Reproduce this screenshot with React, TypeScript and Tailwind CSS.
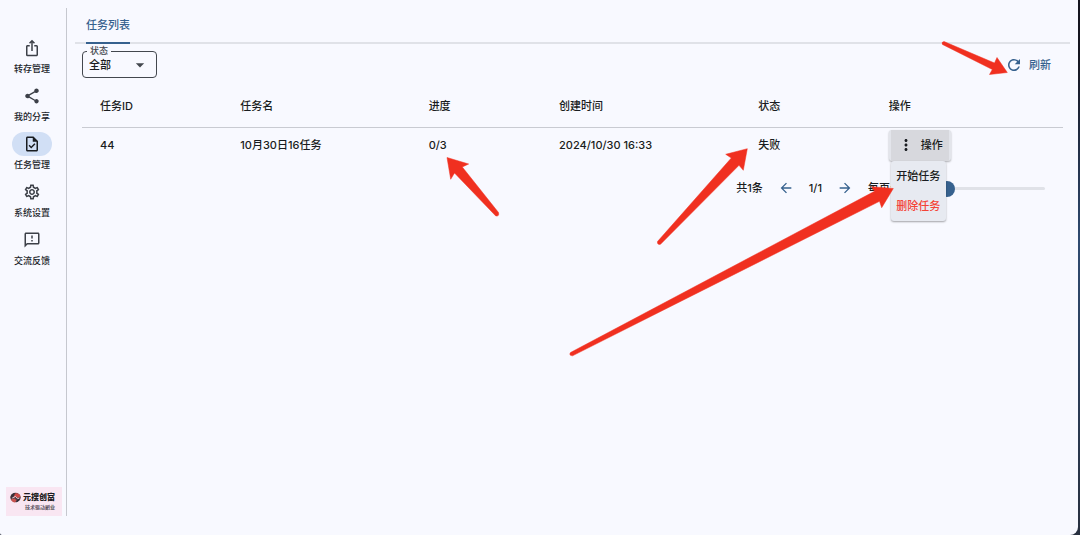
import { useState } from 'react';
import {
  MdArrowBack,
  MdArrowDropDown,
  MdArrowForward,
  MdIosShare,
  MdMoreVert,
  MdOutlineFeedback,
  MdOutlineSettings,
  MdOutlineTask,
  MdRefresh,
  MdShare,
} from 'react-icons/md';

const NAV_ITEMS = [
  { label: '转存管理', icon: MdIosShare },
  { label: '我的分享', icon: MdShare },
  { label: '任务管理', icon: MdOutlineTask },
  { label: '系统设置', icon: MdOutlineSettings },
  { label: '交流反馈', icon: MdOutlineFeedback },
];

const COLUMNS = [
  { label: '任务ID', width: 'w-[14.3%]' },
  { label: '任务名', width: 'w-[19.2%]' },
  { label: '进度', width: 'w-[13.3%]' },
  { label: '创建时间', width: 'w-[20.3%]' },
  { label: '状态', width: 'w-[13.3%]' },
  { label: '操作', width: '' },
];

const TASKS = [
  { id: 44, name: '10月30日16任务', progress: '0/3', created: '2024/10/30 16:33', status: '失败' },
];

function Sidebar({ active, onSelect }: { active: string; onSelect: (label: string) => void }) {
  return (
    <aside className="flex w-[67px] shrink-0 flex-col justify-between border-r border-[#c6c8cf] pt-7">
      <nav className="flex flex-col gap-[6px] pr-[2px]">
        {NAV_ITEMS.map(({ label, icon: Icon }) => (
          <button
            key={label}
            type="button"
            onClick={() => onSelect(label)}
            className="flex flex-col items-center cursor-pointer"
          >
            <span
              className={`flex h-6 w-10 items-center justify-center rounded-full ${active === label ? 'bg-[#d1dff5] text-[#191c20]' : 'text-[#3c4048]'}`}
            >
              <Icon size={18} />
            </span>
            <span className="text-[9px] leading-[18px] font-medium text-[#22252b]">{label}</span>
          </button>
        ))}
      </nav>

      {/* Brand */}
      <div className="ml-[6px] flex h-[29px] w-14 items-start gap-[2px] bg-[#f9e6f2] pt-[5px] pl-1">
        <svg viewBox="0 0 20 20" className="size-[11px] shrink-0">
          <ellipse cx="10" cy="10" rx="9.5" ry="8.5" fill="#5a4048" />
          <path d="M1 9C2 4 7 1 12 2L9 6L4 12Z" fill="#3a3038" />
          <path d="M9 3C14 1 18 4 19 8L14 11L11 8L6 11Z" fill="#cf4a48" />
          <path d="M4 11L10 8L14 12L17 11" fill="none" stroke="#f4dfe8" strokeWidth="1.6" />
          <path d="M2 13L8 12L12 15L9 19C6 19 3 17 2 13Z" fill="#c9524f" />
          <path d="M13 14L18 12C17 16 15 18 11 19Z" fill="#2b2c36" />
        </svg>
        <div className="flex flex-col items-end">
          <span className="text-[8px] leading-[11px] font-black text-[#1d1b20]">元搜创富</span>
          <span className="text-[5px] leading-[8px] font-bold text-[#5b545f]">技术驱动副业</span>
        </div>
      </div>
    </aside>
  );
}

function TaskMenu() {
  return (
    <div className="relative w-[62px]">
      <button
        type="button"
        className="flex h-[31px] w-full rounded-[3px] bg-[#e3e5eb] px-[2px] shadow-[0_1px_2px_rgba(0,0,0,0.3)] cursor-pointer"
      >
        <span className="flex h-full w-full items-center gap-[6px] bg-[#d7d8dd] pl-[6px]">
          <MdMoreVert size={18} />
          操作
        </span>
      </button>
      <div className="absolute top-full left-[2px] z-10 flex w-[55px] flex-col rounded-[3px] bg-[#e7eaf1] shadow-[0_1px_2px_rgba(0,0,0,0.35)]">
        <button type="button" className="h-[30px] text-center cursor-pointer">开始任务</button>
        <button type="button" className="h-[30px] text-center text-[#f44336] cursor-pointer">删除任务</button>
      </div>
    </div>
  );
}

function Pagination() {
  const [size, setSize] = useState(10);
  return (
    <div className="flex h-[50px] items-center justify-end gap-3 pr-[18px]">
      <span>共1条</span>
      <button type="button" aria-label="上一页" className="flex w-[22px] justify-center text-[#36618e] cursor-pointer">
        <MdArrowBack size={16} />
      </button>
      <span>1/1</span>
      <button type="button" aria-label="下一页" className="flex w-[22px] justify-center text-[#36618e] cursor-pointer">
        <MdArrowForward size={16} />
      </button>
      <label htmlFor="page-size" className="w-[59px]">每页:</label>
      <input
        id="page-size"
        type="range"
        min={10}
        max={100}
        value={size}
        onChange={(e) => setSize(Number(e.target.value))}
        className="h-4 w-[106px] appearance-none bg-transparent [&::-webkit-slider-runnable-track]:h-[3px] [&::-webkit-slider-runnable-track]:rounded-full [&::-webkit-slider-runnable-track]:bg-[#e0e2e8] [&::-webkit-slider-thumb]:-mt-[6px] [&::-webkit-slider-thumb]:size-4 [&::-webkit-slider-thumb]:appearance-none [&::-webkit-slider-thumb]:rounded-full [&::-webkit-slider-thumb]:bg-[#36618e]"
      />
    </div>
  );
}

// Red marker arrows drawn over the page
function Annotations() {
  return (
    <svg className="pointer-events-none absolute inset-0 z-20 h-full w-full" fill="#f03020" stroke="#f03020" strokeWidth="0.5" strokeLinejoin="round">
      <path d="M944 41.5L994.5 63L997 57.5L1007.3 72.5L989.5 74.5L992.3 69.5L942.5 44.5Q941 42 944 41.5Z" />
      <path d="M447 157.5L468.7 164L462.3 167L498.5 212.5Q499.5 216.5 495.8 216L454.5 173L450.7 179.3Z" />
      <path d="M747.3 148.7L725.7 154.3L731.3 158L657.5 241.5Q657 245 660.5 244.3L739 165.3L743.3 170.3Z" />
      <path d="M893.3 188.5L871.5 186.7L874.5 191.3L570.5 352.5Q568.5 355.5 572.5 355.8L879.5 201.3L881.7 207.7Z" />
    </svg>
  );
}

export default function App() {
  const [page, setPage] = useState('任务管理');
  const [status, setStatus] = useState('all');

  return (
    <div className="relative min-h-screen bg-linear-to-b from-[#15151f] from-10% via-[#2e4a70] via-45% to-[#28303f] pr-[2px] font-[Inter,'Noto_Sans_CJK_SC',sans-serif] text-[11px] leading-4 font-medium text-[#191c20]">
      <div className="flex min-h-screen rounded-br-lg rounded-bl-[2px] bg-[#f8f9ff] pt-2 pb-[19px]">
        <Sidebar active={page} onSelect={setPage} />

        <main className="min-w-0 flex-1 pr-2 pl-2">
          {/* Tabs */}
          <div className="flex h-9 border-b-2 border-[#e0e2e8] pl-[11px]">
            <button
              type="button"
              className="h-9 rounded-t-[2px] border-b-2 border-[#36618e] text-[#36618e] cursor-pointer"
            >
              任务列表
            </button>
          </div>

          <div className="pr-[7px] pl-[7px]">
            {/* Toolbar */}
            <div className="flex h-[41px] items-start justify-between pr-3">
              <fieldset className="relative h-[34px] w-[75px] rounded-[4px] border border-[#43474e] pl-1">
                <legend className="px-[3px] text-[9px] leading-[14px] text-[#43474e]">
                  <label htmlFor="status">状态</label>
                </legend>
                <select
                  id="status"
                  value={status}
                  onChange={(e) => setStatus(e.target.value)}
                  className="-mt-px block h-4 w-full appearance-none bg-transparent pl-[2px] leading-4 outline-none"
                >
                  <option value="all">全部</option>
                </select>
                <MdArrowDropDown size={20} className="pointer-events-none absolute right-[6px] bottom-[2px] text-[#43474e]" />
              </fieldset>
              <button type="button" className="mt-3 flex items-center gap-[6px] text-[#36618e] cursor-pointer">
                <MdRefresh size={18} />
                刷新
              </button>
            </div>

            <table className="w-full table-fixed text-left">
              <thead>
                <tr className="h-[42px] border-b border-[#c9cbd2]">
                  {COLUMNS.map((c) => (
                    <th key={c.label} className={`pl-[18px] font-medium ${c.width}`}>
                      {c.label}
                    </th>
                  ))}
                </tr>
              </thead>
              <tbody>
                {TASKS.map((t) => (
                  <tr key={t.id} className="h-9">
                    <td className="pl-[18px]">{t.id}</td>
                    <td className="pl-[18px]">{t.name}</td>
                    <td className="pl-[18px]">{t.progress}</td>
                    <td className="pl-[18px]">{t.created}</td>
                    <td className="pl-[18px]">{t.status}</td>
                    <td className="pl-[18px]">
                      <TaskMenu />
                    </td>
                  </tr>
                ))}
              </tbody>
            </table>
            <Pagination />
          </div>
        </main>
      </div>
      <Annotations />
    </div>
  );
}
